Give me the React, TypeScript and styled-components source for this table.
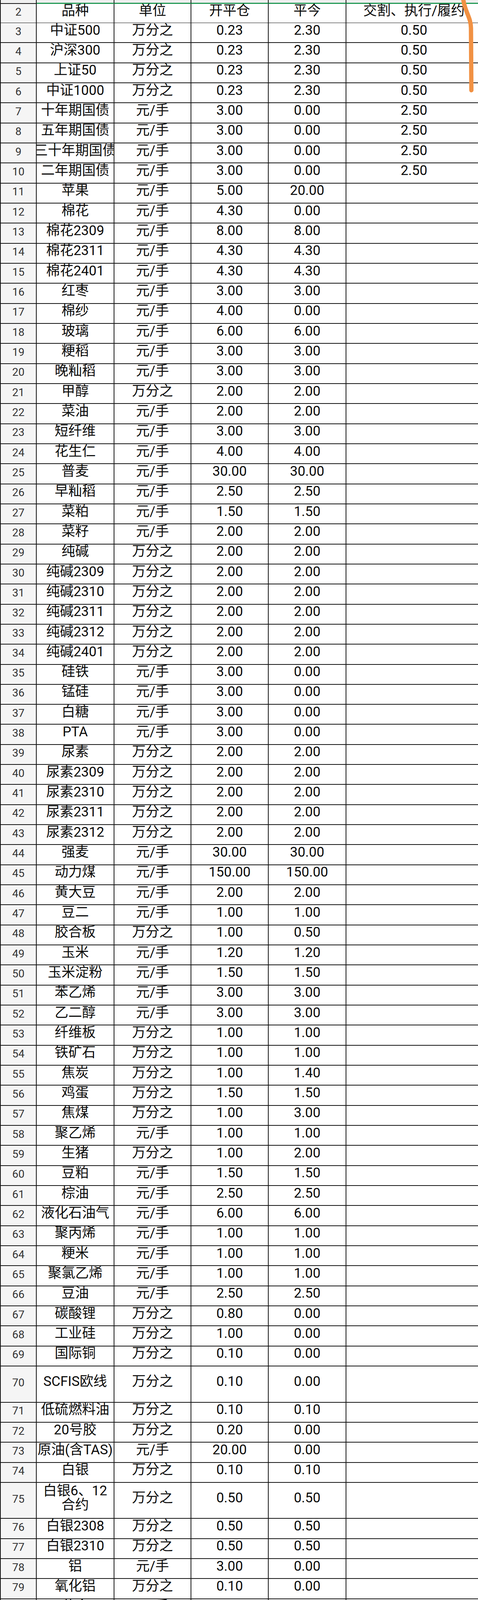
import React from "react";
import styled, { createGlobalStyle } from "styled-components";

const GlobalStyle = createGlobalStyle`
  html, body {
    margin: 0;
    padding: 0;
    background: #ffffff;
  }
  body {
    font-family: Roboto, "Noto Sans CJK SC", sans-serif;
  }
`;

const STD = 51.33;
const TALL = 92.6;
const XTALL = 138.6;

type Kind = "s" | "t" | "x";

const heightOf = (k: Kind) => (k === "t" ? TALL : k === "x" ? XTALL : STD);

type RowData = [number, string, string, string, string, string, Kind];

const rows: RowData[] = [
  [3, "中证500", "万分之", "0.23", "2.30", "0.50", "s"],
  [4, "沪深300", "万分之", "0.23", "2.30", "0.50", "s"],
  [5, "上证50", "万分之", "0.23", "2.30", "0.50", "s"],
  [6, "中证1000", "万分之", "0.23", "2.30", "0.50", "s"],
  [7, "十年期国债", "元/手", "3.00", "0.00", "2.50", "s"],
  [8, "五年期国债", "元/手", "3.00", "0.00", "2.50", "s"],
  [9, "三十年期国债", "元/手", "3.00", "0.00", "2.50", "s"],
  [10, "二年期国债", "元/手", "3.00", "0.00", "2.50", "s"],
  [11, "苹果", "元/手", "5.00", "20.00", "", "s"],
  [12, "棉花", "元/手", "4.30", "0.00", "", "s"],
  [13, "棉花2309", "元/手", "8.00", "8.00", "", "s"],
  [14, "棉花2311", "元/手", "4.30", "4.30", "", "s"],
  [15, "棉花2401", "元/手", "4.30", "4.30", "", "s"],
  [16, "红枣", "元/手", "3.00", "3.00", "", "s"],
  [17, "棉纱", "元/手", "4.00", "0.00", "", "s"],
  [18, "玻璃", "元/手", "6.00", "6.00", "", "s"],
  [19, "粳稻", "元/手", "3.00", "3.00", "", "s"],
  [20, "晚籼稻", "元/手", "3.00", "3.00", "", "s"],
  [21, "甲醇", "万分之", "2.00", "2.00", "", "s"],
  [22, "菜油", "元/手", "2.00", "2.00", "", "s"],
  [23, "短纤维", "元/手", "3.00", "3.00", "", "s"],
  [24, "花生仁", "元/手", "4.00", "4.00", "", "s"],
  [25, "普麦", "元/手", "30.00", "30.00", "", "s"],
  [26, "早籼稻", "元/手", "2.50", "2.50", "", "s"],
  [27, "菜粕", "元/手", "1.50", "1.50", "", "s"],
  [28, "菜籽", "元/手", "2.00", "2.00", "", "s"],
  [29, "纯碱", "万分之", "2.00", "2.00", "", "s"],
  [30, "纯碱2309", "万分之", "2.00", "2.00", "", "s"],
  [31, "纯碱2310", "万分之", "2.00", "2.00", "", "s"],
  [32, "纯碱2311", "万分之", "2.00", "2.00", "", "s"],
  [33, "纯碱2312", "万分之", "2.00", "2.00", "", "s"],
  [34, "纯碱2401", "万分之", "2.00", "2.00", "", "s"],
  [35, "硅铁", "元/手", "3.00", "0.00", "", "s"],
  [36, "锰硅", "元/手", "3.00", "0.00", "", "s"],
  [37, "白糖", "元/手", "3.00", "0.00", "", "s"],
  [38, "PTA", "元/手", "3.00", "0.00", "", "s"],
  [39, "尿素", "万分之", "2.00", "2.00", "", "s"],
  [40, "尿素2309", "万分之", "2.00", "2.00", "", "s"],
  [41, "尿素2310", "万分之", "2.00", "2.00", "", "s"],
  [42, "尿素2311", "万分之", "2.00", "2.00", "", "s"],
  [43, "尿素2312", "万分之", "2.00", "2.00", "", "s"],
  [44, "强麦", "元/手", "30.00", "30.00", "", "s"],
  [45, "动力煤", "元/手", "150.00", "150.00", "", "s"],
  [46, "黄大豆", "元/手", "2.00", "2.00", "", "s"],
  [47, "豆二", "元/手", "1.00", "1.00", "", "s"],
  [48, "胶合板", "万分之", "1.00", "0.50", "", "s"],
  [49, "玉米", "元/手", "1.20", "1.20", "", "s"],
  [50, "玉米淀粉", "元/手", "1.50", "1.50", "", "s"],
  [51, "苯乙烯", "元/手", "3.00", "3.00", "", "s"],
  [52, "乙二醇", "元/手", "3.00", "3.00", "", "s"],
  [53, "纤维板", "万分之", "1.00", "1.00", "", "s"],
  [54, "铁矿石", "万分之", "1.00", "1.00", "", "s"],
  [55, "焦炭", "万分之", "1.00", "1.40", "", "s"],
  [56, "鸡蛋", "万分之", "1.50", "1.50", "", "s"],
  [57, "焦煤", "万分之", "1.00", "3.00", "", "s"],
  [58, "聚乙烯", "元/手", "1.00", "1.00", "", "s"],
  [59, "生猪", "万分之", "1.00", "2.00", "", "s"],
  [60, "豆粕", "元/手", "1.50", "1.50", "", "s"],
  [61, "棕油", "元/手", "2.50", "2.50", "", "s"],
  [62, "液化石油气", "元/手", "6.00", "6.00", "", "s"],
  [63, "聚丙烯", "元/手", "1.00", "1.00", "", "s"],
  [64, "粳米", "元/手", "1.00", "1.00", "", "s"],
  [65, "聚氯乙烯", "元/手", "1.00", "1.00", "", "s"],
  [66, "豆油", "元/手", "2.50", "2.50", "", "s"],
  [67, "碳酸锂", "万分之", "0.80", "0.00", "", "s"],
  [68, "工业硅", "万分之", "1.00", "0.00", "", "s"],
  [69, "国际铜", "万分之", "0.10", "0.00", "", "s"],
  [70, "SCFIS欧线", "万分之", "0.10", "0.00", "", "t"],
  [71, "低硫燃料油", "万分之", "0.10", "0.10", "", "s"],
  [72, "20号胶", "万分之", "0.20", "0.00", "", "s"],
  [73, "原油(含TAS)", "元/手", "20.00", "0.00", "", "s"],
  [74, "白银", "万分之", "0.10", "0.10", "", "s"],
  [75, "白银6、12\n合约", "万分之", "0.50", "0.50", "", "t"],
  [76, "白银2308", "万分之", "0.50", "0.50", "", "s"],
  [77, "白银2310", "万分之", "0.50", "0.50", "", "s"],
  [78, "铝", "元/手", "3.00", "0.00", "", "s"],
  [79, "氧化铝", "万分之", "0.10", "0.00", "", "s"],
  [80, "黄金", "元/手", "2.00", "0.00", "", "s"],
  [81, "黄金6、12\n合约", "元/手", "10.00", "0.00", "", "t"],
  [82, "黄金2310", "元/手", "10.00", "0.00", "", "s"],
  [83, "丁二烯橡胶", "万分之", "0.10", "0.00", "", "t"],
  [84, "沥青", "万分之", "1.00", "1.00", "", "s"],
  [85, "铜", "万分之", "0.50", "1.00", "", "s"],
  [86, "燃料油", "万分之", "0.10", "0.00", "", "s"],
  [87, "燃料油1、5\n、9合约", "万分之", "0.50", "0.00", "", "x"],
  [88, "燃料油230\n9", "万分之", "0.50", "1.00", "", "t"],
  [89, "燃料油231\n0", "万分之", "0.50", "0.00", "", "t"],
  [90, "热轧卷板", "万分之", "1.00", "1.00", "", "s"],
  [91, "镍", "元/手", "3.00", "3.00", "", "s"],
  [92, "镍2309", "元/手", "3.00", "18.00", "", "s"],
  [93, "铅", "万分之", "0.40", "0.00", "", "s"],
  [94, "螺纹", "万分之", "1.00", "1.00", "", "s"],
  [95, "螺纹2401", "万分之", "3.00", "3.00", "", "s"],
  [96, "螺纹2405", "万分之", "3.00", "3.00", "", "s"],
  [97, "天胶", "元/手", "3.00", "0.00", "", "s"],
  [98, "锡", "元/手", "3.00", "3.00", "", "s"],
  [99, "锡2309", "元/手", "3.00", "21.00", "", "s"],
  [100, "纸浆", "万分之", "0.50", "0.00", "", "s"],
  [101, "不锈钢", "元/手", "2.00", "0.00", "", "s"],
  [102, "线材", "万分之", "0.40", "0.00", "", "s"],
  [103, "锌", "元/手", "3.00", "0.00", "", "s"],
  [104, "上证50股指\n期权", "元/手", "15.00", "15.00", "1.00", "t"],
  [105, "沪深300股\n指期权", "元/手", "15.00", "15.00", "1.00", "t"],
  [106, "中证1000\n股指期权", "元/手", "15.00", "15.00", "1.00", "t"],
  [107, "棉花期权", "元/手", "1.50", "0.00", "1.50", "s"],
  [108, "甲醇期权", "元/手", "0.50", "0.00", "0.50", "s"],
  [109, "菜籽油期权", "元/手", "1.50", "0.00", "1.50", "t"],
  [110, "花生期权", "元/手", "0.80", "0.00", "0.80", "s"],
  [111, "菜籽粕期权", "元/手", "0.80", "0.00", "0.80", "t"],
  [112, "白糖期权", "元/手", "1.50", "0.00", "1.50", "s"],
  [113, "PTA期权", "元/手", "0.50", "0.00", "0.50", "s"],
  [114, "新动力煤期\n权", "元/手", "150.00", "150.00", "150.00", "t"],
  [115, "黄大豆1号\n期权", "元/手", "0.50", "0.50", "1.00", "t"],
  [116, "黄大豆2号\n期权", "元/手", "0.20", "0.20", "0.50", "t"],
  [117, "玉米期权", "元/手", "0.60", "0.60", "0.60", "s"],
  [118, "苯乙烯期权", "元/手", "0.50", "0.50", "1.00", "t"],
  [119, "乙二醇期权", "元/手", "0.50", "0.50", "1.00", "t"],
  [120, "铁矿石期权", "元/手", "2.00", "2.00", "2.00", "t"],
];

const Page = styled.div`
  position: relative;
  width: 1224px;
  height: 6884px;
  overflow: hidden;
  background: #ffffff;
`;

const Sheet = styled.div`
  width: 1235px;
  display: flex;
  flex-direction: column;
`;

const Row = styled.div<{ $h: number }>`
  display: grid;
  grid-template-columns: 94px 199px 197px 198px 199px 348px;
  height: ${(p) => p.$h}px;
  flex-shrink: 0;
`;

const NumCell = styled.div<{ $top?: boolean }>`
  box-sizing: border-box;
  background: ${(p) => (p.$top ? "#efefef" : "#f5f5f5")};
  border-left: 2px solid #151515;
  border-right: 2px solid #151515;
  border-bottom: 2px solid #151515;
  display: flex;
  align-items: center;
  justify-content: center;
  padding-bottom: ${(p) => (p.$top ? 0 : 6)}px;
  font-family: Roboto, "Noto Sans CJK SC", sans-serif;
  font-size: 28px;
  line-height: 32px;
  color: #333333;
`;

const Cell = styled.div<{ $clip?: boolean }>`
  box-sizing: border-box;
  border-right: 2px solid #151515;
  border-bottom: 2px solid #151515;
  background: #ffffff;
  display: flex;
  align-items: center;
  justify-content: center;
  padding-bottom: 12px;
  font-family: Roboto, "Noto Sans CJK SC", sans-serif;
  font-size: 35px;
  line-height: 36px;
  color: #0a0a0a;
  white-space: pre;
  text-align: center;
  overflow: ${(p) => (p.$clip ? "hidden" : "visible")};
  min-width: 0;
`;

const TopCell = styled.div`
  box-sizing: border-box;
  background: #efefef;
  border-right: 2px solid #151515;
  border-bottom: 3px solid #249a57;
`;

const Scribble = styled.svg`
  position: absolute;
  left: 0;
  top: 0;
  pointer-events: none;
`;

const fits = (s: string) => {
  let w = 0;
  for (const ch of s) {
    w += /[\u3000-\u9fff]/.test(ch) ? 35 : 19;
  }
  return w <= 200;
};

export default function App() {
  return (
    <>
      <GlobalStyle />
      <Page>
        <Sheet>
          <Row $h={10}>
            <NumCell $top />
            <TopCell />
            <TopCell />
            <TopCell />
            <TopCell />
            <TopCell />
          </Row>
          <Row $h={49}>
            <NumCell>2</NumCell>
            <Cell>品种</Cell>
            <Cell>单位</Cell>
            <Cell>开平仓</Cell>
            <Cell>平今</Cell>
            <Cell>交割、执行/履约</Cell>
          </Row>
          {rows.map(([n, name, unit, open, today, deliv, k]) => (
            <Row key={n} $h={heightOf(k)}>
              <NumCell>{n}</NumCell>
              <Cell $clip={!name.split("\n").every(fits)}>{name}</Cell>
              <Cell>{unit}</Cell>
              <Cell>{open}</Cell>
              <Cell>{today}</Cell>
              <Cell>{deliv}</Cell>
            </Row>
          ))}
        </Sheet>
        <Scribble width="1224" height="260" viewBox="0 0 1224 260">
          <path
            d="M1186 -4 C1189 28 1206 44 1206 72 L1207 231"
            fill="none"
            stroke="#f19143"
            strokeWidth="11"
            strokeLinecap="round"
            strokeLinejoin="round"
          />
        </Scribble>
      </Page>
    </>
  );
}
